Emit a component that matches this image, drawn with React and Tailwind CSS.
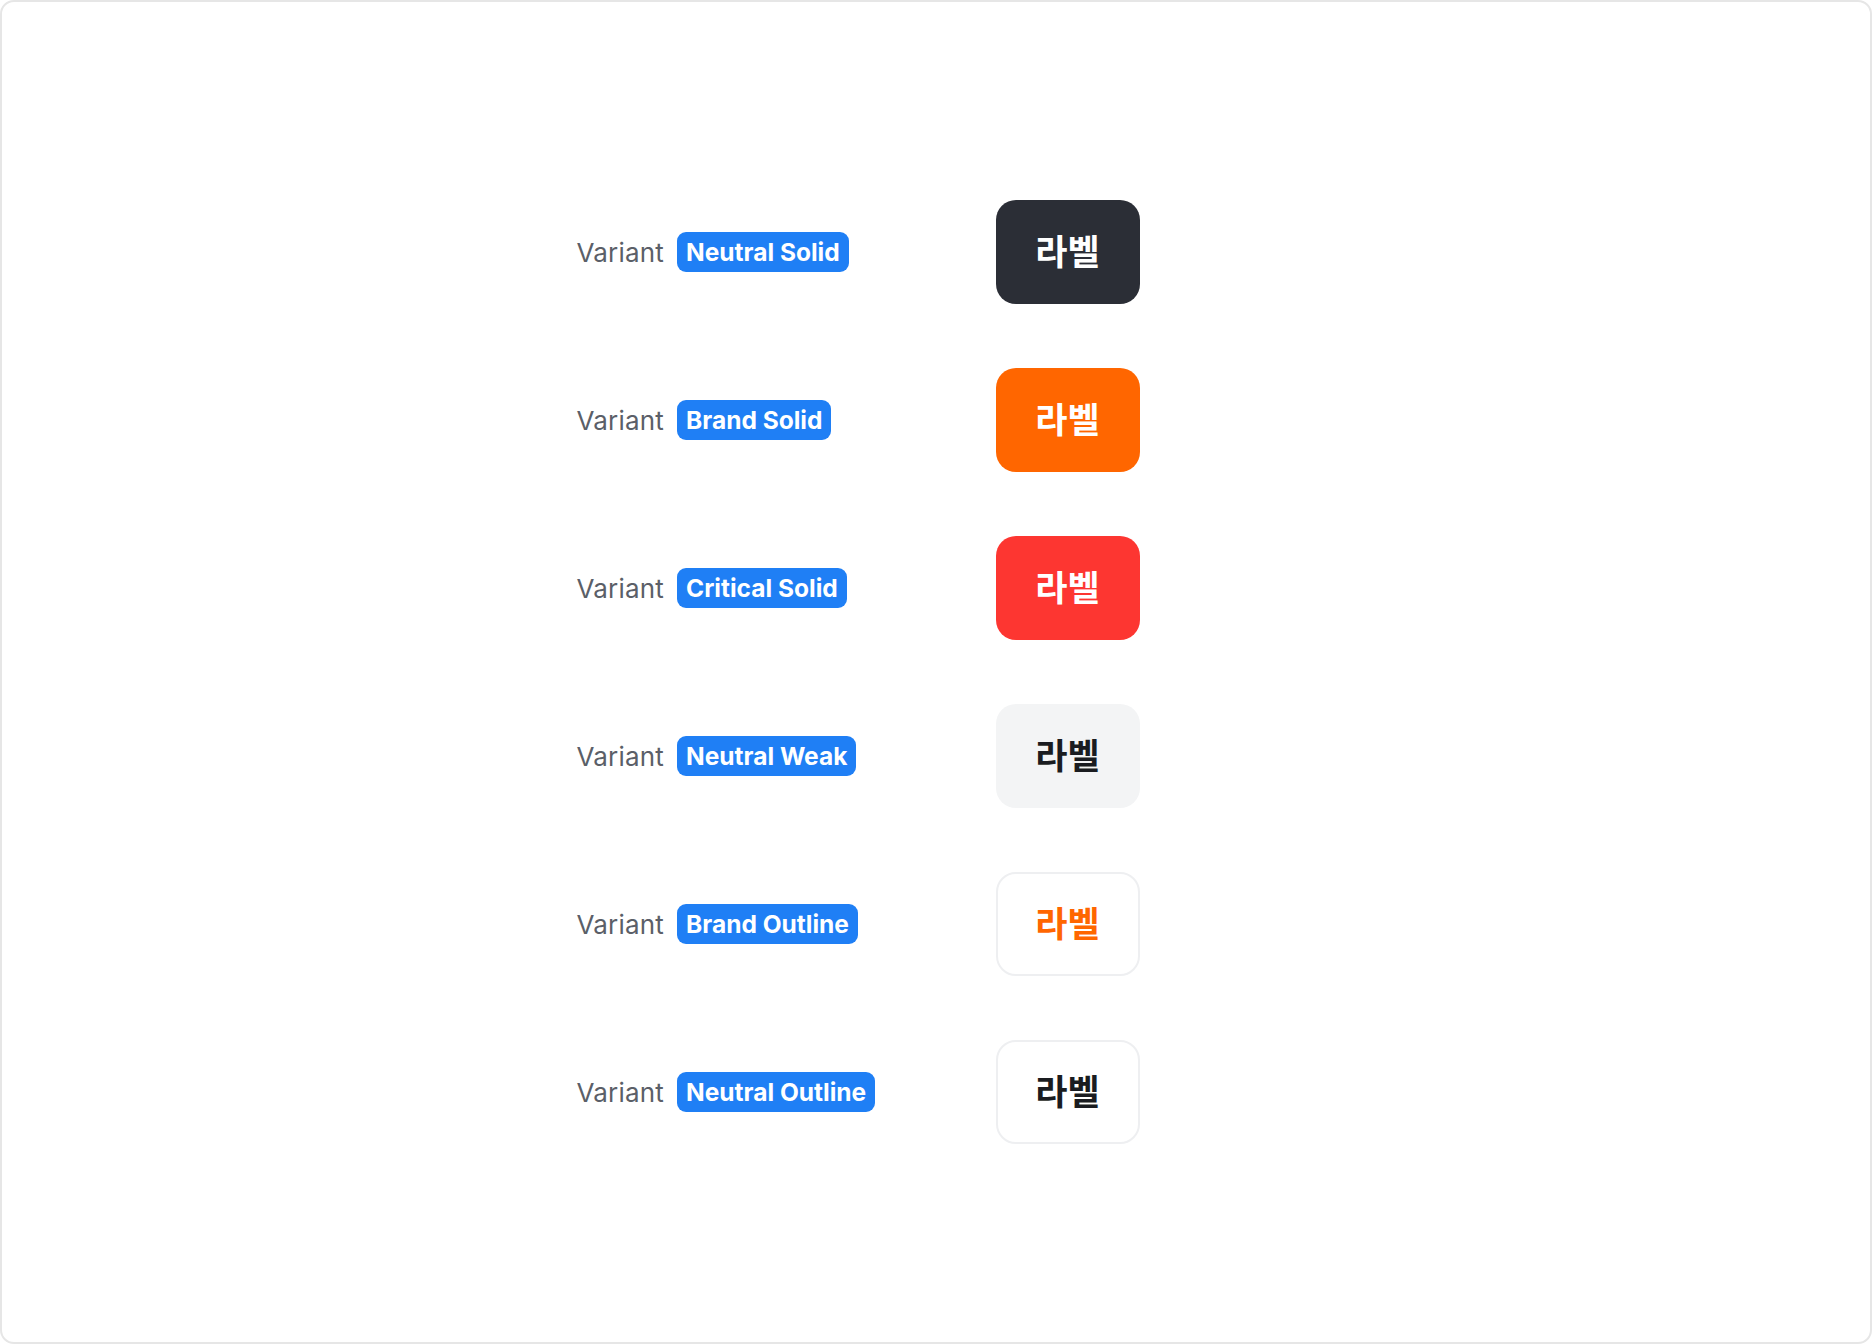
import React from 'react';

const variants = [
  { name: 'Neutral Solid', box: 'bg-[#2b2e36] text-white' },
  { name: 'Brand Solid', box: 'bg-[#ff6600] text-white' },
  { name: 'Critical Solid', box: 'bg-[#fd3631] text-white' },
  { name: 'Neutral Weak', box: 'bg-[#f3f4f5] text-[#1a1c20]' },
  { name: 'Brand Outline', box: 'bg-white text-[#ff6600] border-2 border-[#eeeff1]' },
  { name: 'Neutral Outline', box: 'bg-white text-[#1a1c20] border-2 border-[#eeeff1]' },
];

const font = { fontFamily: 'Inter, "Noto Sans CJK KR", sans-serif' };

export default function App() {
  return (
    <div
      className="w-full h-screen bg-white border-2 border-[#e6e6e6] rounded-[14px] flex items-center justify-center"
      style={font}
    >
      <div className="flex flex-col gap-16">
        {variants.map((v) => (
          <div key={v.name} className="flex items-center">
            <div className="w-[419px] flex items-center gap-[13px]">
              <span className="text-[26px] text-[#5b5f68] tracking-[0.2px]">Variant</span>
              <span className="bg-[#1f7ff5] text-white text-[24.5px] font-bold leading-[30px] px-[9px] py-[5px] rounded-[9px]">
                {v.name}
              </span>
            </div>
            <div className="w-[300px]">
              <div
                className={`w-[144px] h-[104px] rounded-[20px] flex items-center justify-center text-[35px] font-bold ${v.box}`}
              >
                라벨
              </div>
            </div>
          </div>
        ))}
      </div>
    </div>
  );
}
